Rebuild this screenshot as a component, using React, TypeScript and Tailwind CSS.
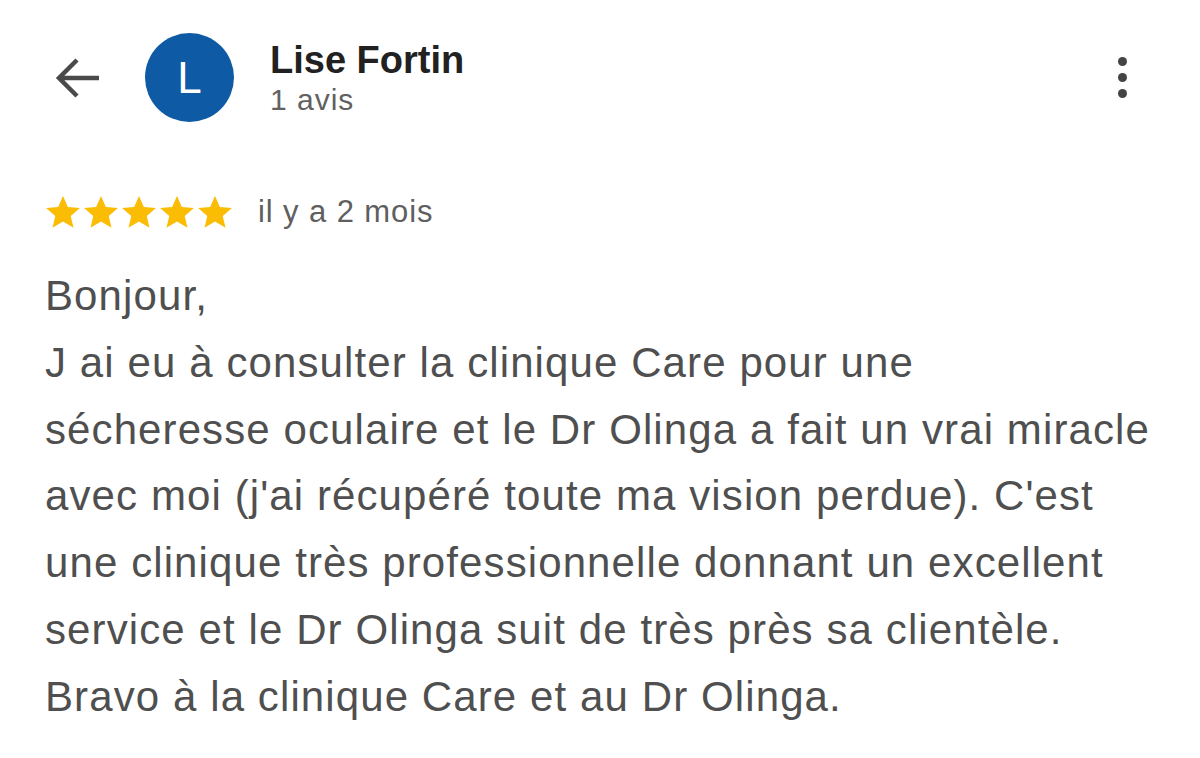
import React from "react";

const Star = () => (
  <svg width="38" height="36" viewBox="0 0 24 23" className="shrink-0">
    <path
      d="M12 1.2l3.09 7.1 7.71.66-5.85 5.08 1.75 7.56L12 17.64 5.3 21.6l1.75-7.56L1.2 8.96l7.71-.66z"
      fill="#fbbc04"
    />
  </svg>
);

export default function App() {
  const lines = [
    "Bonjour,",
    "J ai eu à consulter la clinique Care pour une",
    "sécheresse oculaire et le Dr Olinga a fait un vrai miracle",
    "avec moi (j'ai récupéré toute ma vision perdue). C'est",
    "une clinique très professionnelle donnant un excellent",
    "service et le Dr Olinga suit de très près sa clientèle.",
    "Bravo à la clinique Care et au Dr Olinga.",
  ];
  return (
    <div className="w-[1200px] h-[758px] bg-white overflow-hidden font-['Liberation_Sans',Arial,sans-serif]">
      <div className="flex items-center h-[89px] mt-[33px] pl-[55px] pr-[73px]">
        <svg width="46" height="42" viewBox="0 0 46 42" className="shrink-0">
          <path
            d="M44 21H5M22 3L4 21l18 18"
            fill="none"
            stroke="#4a4a4a"
            strokeWidth="4.5"
            strokeLinecap="butt"
            strokeLinejoin="miter"
          />
        </svg>
        <div className="ml-[44px] w-[89px] h-[89px] rounded-full bg-[#0f5aa5] flex items-center justify-center text-white text-[44px] leading-none shrink-0">
          L
        </div>
        <div className="ml-[36px] flex flex-col">
          <div className="text-[38px] leading-[44px] font-bold text-[#212121]">Lise Fortin</div>
          <div className="text-[30px] leading-[36px] text-[#616161] tracking-[1px]">1 avis</div>
        </div>
        <div className="ml-auto flex flex-col items-center gap-[7px]">
          <div className="w-[9px] h-[9px] rounded-full bg-[#444]" />
          <div className="w-[9px] h-[9px] rounded-full bg-[#444]" />
          <div className="w-[9px] h-[9px] rounded-full bg-[#444]" />
        </div>
      </div>

      <div className="flex items-center h-[36px] mt-[72px] pl-[44px]">
        <div className="flex">
          <Star />
          <Star />
          <Star />
          <Star />
          <Star />
        </div>
        <span className="ml-[24px] text-[31px] tracking-[0.9px] text-[#5f5f5f]">il y a 2 mois</span>
      </div>

      <div className="mt-[33px] pl-[45px] text-[42px] leading-[66.8px] tracking-[1.1px] text-[#4f4f4f]">
        {lines.map((l, i) => (
          <div key={i} className="whitespace-nowrap">
            {l}
          </div>
        ))}
      </div>
    </div>
  );
}
